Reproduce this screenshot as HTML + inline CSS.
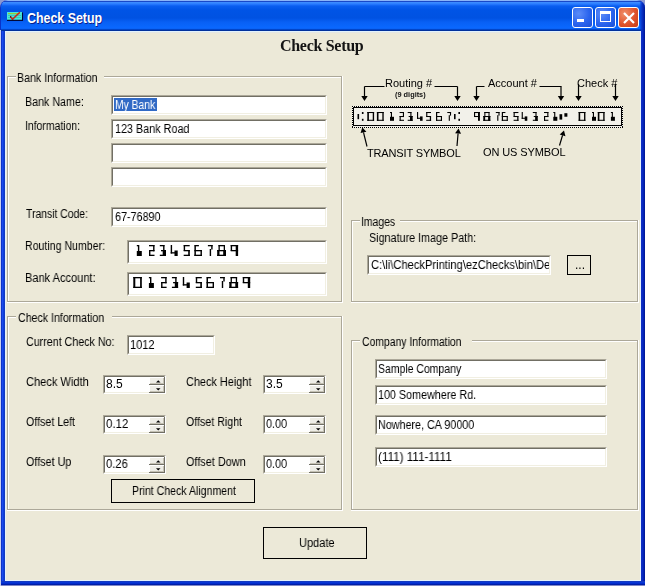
<!DOCTYPE html><html><head><meta charset="utf-8"><style>
*{margin:0;padding:0;box-sizing:border-box}
html,body{width:645px;height:586px;overflow:hidden;background:#8c98d0}
body{position:relative;font-family:"Liberation Sans",sans-serif;font-size:11px;color:#000}
.a{position:absolute}
.t{position:absolute;white-space:pre;line-height:13px;letter-spacing:-0.28px;will-change:transform}
.gl{position:absolute;background:#aca899}
.gw{position:absolute;background:#fff}
.tb{position:absolute;background:#fff}
.tb .o{position:absolute;left:0;top:0;right:0;bottom:0;border-top:1px solid #aca899;border-left:1px solid #aca899;border-right:1px solid #fff;border-bottom:1px solid #fff}
.tb .i{position:absolute;left:1px;top:1px;right:1px;bottom:1px;border-top:1px solid #716f64;border-left:1px solid #716f64;border-right:1px solid #f1efe2;border-bottom:1px solid #f1efe2}
.btn{position:absolute;border:1px solid #000;background:#ece9d8}
svg{position:absolute;left:0;top:0}
</style></head><body>
<div class="a" style="left:0;top:0;width:645px;height:586px;background:#0a32c8;border-radius:8px 8px 0 0"></div>
<div class="a" style="left:1px;top:1px;width:643px;height:584px;background:#1848e8;border-radius:7px 7px 0 0"></div>
<div class="a" style="left:1px;top:0px;width:643px;height:31px;border-radius:7px 7px 0 0;background:linear-gradient(180deg,#8ab4f8 0px,#8ab4f8 1px,#1848c8 1px,#1848c8 2px,#4090ff 2px,#2a7cff 4px,#0a5ef0 6px,#0054e6 10px,#0052e2 18px,#0860f4 22px,#0a68ff 28px,#0a60f0 29px,#0040c0 29.6px,#00309c 30.5px,#00309c 31px)"></div>
<div class="a" style="left:1px;top:31px;width:4px;height:554px;background:linear-gradient(90deg,#0020b0,#2050f0 30%,#0a3ada 70%,#1a3ab0)"></div>
<div class="a" style="left:641px;top:31px;width:4px;height:554px;background:linear-gradient(90deg,#1030c0,#0a2cc8 30%,#0020b0 70%,#001490)"></div>
<div class="a" style="left:638px;top:1px;width:7px;height:30px;border-radius:0 7px 0 0;background:linear-gradient(90deg,rgba(16,64,216,0) 20%,#0a34c8 55%,#0020a8 85%,#001890)"></div>
<div class="a" style="left:1px;top:581px;width:644px;height:4px;background:linear-gradient(180deg,#1a3ab0,#0a3ada 30%,#0028c8 70%,#001890)"></div>
<div class="a" style="left:0;top:585px;width:645px;height:1px;background:#8088c8"></div>
<div class="a" style="left:0;top:30px;width:1px;height:556px;background:#c8d0f0"></div>
<div class="a" style="left:5px;top:31px;width:636px;height:550px;background:#ece9d8;border:1px solid #e4f2fc;border-right-color:#e4f2fc"></div>
<div class="a" style="left:6px;top:31px;width:634px;height:1px;background:#e2f2fc"></div><div class="a" style="left:6px;top:32px;width:634px;height:1px;background:#e4e6e2"></div>
<svg class="a" style="left:6px;top:11px" width="18" height="11"><rect x="1" y="1" width="15" height="8" fill="#48e8d8"/><rect x="2" y="2" width="12" height="1.2" fill="#98c838"/><rect x="2" y="4" width="13" height="0.8" fill="#38b8c0"/><rect x="2" y="6" width="13" height="0.8" fill="#38c8b0"/><rect x="4" y="5" width="1.2" height="2" fill="#203040"/><path d="M4.8 6 L6.5 8.3 L13.8 1.3" stroke="#c82818" stroke-width="1.5" fill="none"/><path d="M1 9.4 H16.5 V1.5" stroke="#000838" stroke-width="1.1" fill="none"/></svg>
<div class="a" style="left:27px;top:11px;color:#fff;font-weight:bold;font-size:14px;line-height:15px;white-space:pre;transform:scaleX(0.885);transform-origin:0 0;text-shadow:1px 1px 0 #0a1e8a">Check Setup</div>
<div class="a" style="left:572px;top:7px;width:21px;height:21px;border:1px solid #fff;border-radius:3px;background:radial-gradient(circle at 30% 30%,#5c8cf8,#2a64ee 55%,#1a50d8)"></div>
<div class="a" style="left:595px;top:7px;width:21px;height:21px;border:1px solid #fff;border-radius:3px;background:radial-gradient(circle at 30% 30%,#5c8cf8,#2a64ee 55%,#1a50d8)"></div>
<div class="a" style="left:618px;top:7px;width:21px;height:21px;border:1px solid #fff;border-radius:3px;background:radial-gradient(circle at 30% 30%,#f0906c,#e0542c 55%,#c83c14)"></div>
<div class="a" style="left:577px;top:19px;width:7px;height:3px;background:#fff"></div>
<div class="a" style="left:600px;top:11px;width:11px;height:11px;border:1px solid #fff;border-top-width:3px"></div>
<svg class="a" style="left:618px;top:6px" width="22" height="22"><path d="M6 7 L16 17 M16 7 L6 17" stroke="#fff" stroke-width="2.2"/></svg>
<div class="a" style="left:280px;top:37px;font-family:'Liberation Serif',serif;font-weight:bold;font-size:16px;line-height:17px;letter-spacing:-0.3px;white-space:pre;color:#141414;will-change:transform">Check Setup</div>
<div class="gl" style="left:7px;top:76px;width:9px;height:1px"></div>
<div class="gl" style="left:104px;top:76px;width:238px;height:1px"></div>
<div class="gl" style="left:7px;top:76px;width:1px;height:226px"></div>
<div class="gl" style="left:341px;top:76px;width:1px;height:226px"></div>
<div class="gl" style="left:7px;top:301px;width:335px;height:1px"></div>
<div class="gw" style="left:8px;top:77px;width:8px;height:1px"></div>
<div class="gw" style="left:104px;top:77px;width:237px;height:1px"></div>
<div class="gw" style="left:8px;top:77px;width:1px;height:224px"></div>
<div class="gw" style="left:342px;top:76px;width:1px;height:227px"></div>
<div class="gw" style="left:7px;top:302px;width:336px;height:1px"></div>
<div class="t" style="left:17px;top:72px;font-size:12px;letter-spacing:0;transform:scaleX(0.888);transform-origin:0 0;">Bank Information</div>
<div class="t" style="left:25px;top:96px;font-size:12px;letter-spacing:0;transform:scaleX(0.891);transform-origin:0 0;">Bank Name:</div>
<div class="t" style="left:25px;top:120px;font-size:12px;letter-spacing:0;transform:scaleX(0.869);transform-origin:0 0;">Information:</div>
<div class="t" style="left:26px;top:208px;font-size:12px;letter-spacing:0;transform:scaleX(0.865);transform-origin:0 0;">Transit Code:</div>
<div class="t" style="left:25px;top:240px;font-size:12px;letter-spacing:0;transform:scaleX(0.882);transform-origin:0 0;">Routing Number:</div>
<div class="t" style="left:25px;top:272px;font-size:12px;letter-spacing:0;transform:scaleX(0.92);transform-origin:0 0;">Bank Account:</div>
<div class="tb" style="left:111px;top:95px;width:216px;height:20px"><div class="o"></div><div class="i"></div></div>
<div class="a" style="left:114px;top:98px;width:43px;height:13px;background:#316ac5"></div>
<div class="t" style="left:114.5px;top:99px;font-size:12px;letter-spacing:0;transform:scaleX(0.86);transform-origin:0 0;color:#fff">My Bank</div>
<div class="tb" style="left:111px;top:119px;width:216px;height:20px"><div class="o"></div><div class="i"></div></div>
<div class="t" style="left:114.5px;top:123px;font-size:12px;letter-spacing:0;transform:scaleX(0.9);transform-origin:0 0;">123 Bank Road</div>
<div class="tb" style="left:111px;top:143px;width:216px;height:20px"><div class="o"></div><div class="i"></div></div>
<div class="tb" style="left:111px;top:167px;width:216px;height:20px"><div class="o"></div><div class="i"></div></div>
<div class="tb" style="left:111px;top:207px;width:216px;height:20px"><div class="o"></div><div class="i"></div></div>
<div class="t" style="left:114.5px;top:211px;font-size:12px;letter-spacing:0;transform:scaleX(0.898);transform-origin:0 0;">67-76890</div>
<div class="tb" style="left:127px;top:240px;width:200px;height:24px"><div class="o"></div><div class="i"></div></div>
<div class="tb" style="left:127px;top:272px;width:200px;height:24px"><div class="o"></div><div class="i"></div></div>
<div class="gl" style="left:7px;top:316px;width:9px;height:1px"></div>
<div class="gl" style="left:112px;top:316px;width:230px;height:1px"></div>
<div class="gl" style="left:7px;top:316px;width:1px;height:194px"></div>
<div class="gl" style="left:341px;top:316px;width:1px;height:194px"></div>
<div class="gl" style="left:7px;top:509px;width:335px;height:1px"></div>
<div class="gw" style="left:8px;top:317px;width:8px;height:1px"></div>
<div class="gw" style="left:112px;top:317px;width:229px;height:1px"></div>
<div class="gw" style="left:8px;top:317px;width:1px;height:192px"></div>
<div class="gw" style="left:342px;top:316px;width:1px;height:195px"></div>
<div class="gw" style="left:7px;top:510px;width:336px;height:1px"></div>
<div class="t" style="left:18px;top:312px;font-size:12px;letter-spacing:0;transform:scaleX(0.885);transform-origin:0 0;">Check Information</div>
<div class="t" style="left:26px;top:336px;font-size:12px;letter-spacing:0;transform:scaleX(0.891);transform-origin:0 0;">Current Check No:</div>
<div class="tb" style="left:127px;top:335px;width:88px;height:20px"><div class="o"></div><div class="i"></div></div>
<div class="t" style="left:130px;top:339px;font-size:12px;letter-spacing:0;transform:scaleX(0.92);transform-origin:0 0;">1012</div>
<div class="t" style="left:26px;top:376px;font-size:12px;letter-spacing:0;transform:scaleX(0.924);transform-origin:0 0;">Check Width</div>
<div class="t" style="left:186px;top:376px;font-size:12px;letter-spacing:0;transform:scaleX(0.908);transform-origin:0 0;">Check Height</div>
<div class="t" style="left:26px;top:416px;font-size:12px;letter-spacing:0;transform:scaleX(0.889);transform-origin:0 0;">Offset Left</div>
<div class="t" style="left:186px;top:416px;font-size:12px;letter-spacing:0;transform:scaleX(0.887);transform-origin:0 0;">Offset Right</div>
<div class="t" style="left:26px;top:456px;font-size:12px;letter-spacing:0;transform:scaleX(0.898);transform-origin:0 0;">Offset Up</div>
<div class="t" style="left:186px;top:456px;font-size:12px;letter-spacing:0;transform:scaleX(0.906);transform-origin:0 0;">Offset Down</div>
<div class="tb" style="left:103px;top:375px;width:63px;height:19px"><div class="o"></div><div class="i"></div></div>
<div class="t" style="left:106px;top:378px;font-size:12px;letter-spacing:0;transform:scaleX(1.0);transform-origin:0 0;">8.5</div>
<div class="a" style="left:149px;top:377px;width:16px;height:8px;background:#eeede6;border-right:1px solid #716f64;border-bottom:1px solid #716f64;box-shadow:inset 1px 1px 0 #fff,inset -1px -1px 0 #c4c1b4"></div>
<svg class="a" style="left:156px;top:380px" width="5" height="3"><path d="M0 2.5 L2.25 0.2 L4.5 2.5Z" fill="#000"/></svg>
<div class="a" style="left:149px;top:385px;width:16px;height:8px;background:#eeede6;border-right:1px solid #716f64;border-bottom:1px solid #716f64;box-shadow:inset 1px 1px 0 #fff,inset -1px -1px 0 #c4c1b4"></div>
<svg class="a" style="left:156px;top:388px" width="5" height="3"><path d="M0 0.3 L2.25 2.6 L4.5 0.3Z" fill="#000"/></svg>
<div class="tb" style="left:263px;top:375px;width:63px;height:19px"><div class="o"></div><div class="i"></div></div>
<div class="t" style="left:266px;top:378px;font-size:12px;letter-spacing:0;transform:scaleX(1.0);transform-origin:0 0;">3.5</div>
<div class="a" style="left:309px;top:377px;width:16px;height:8px;background:#eeede6;border-right:1px solid #716f64;border-bottom:1px solid #716f64;box-shadow:inset 1px 1px 0 #fff,inset -1px -1px 0 #c4c1b4"></div>
<svg class="a" style="left:316px;top:380px" width="5" height="3"><path d="M0 2.5 L2.25 0.2 L4.5 2.5Z" fill="#000"/></svg>
<div class="a" style="left:309px;top:385px;width:16px;height:8px;background:#eeede6;border-right:1px solid #716f64;border-bottom:1px solid #716f64;box-shadow:inset 1px 1px 0 #fff,inset -1px -1px 0 #c4c1b4"></div>
<svg class="a" style="left:316px;top:388px" width="5" height="3"><path d="M0 0.3 L2.25 2.6 L4.5 0.3Z" fill="#000"/></svg>
<div class="tb" style="left:103px;top:415px;width:63px;height:19px"><div class="o"></div><div class="i"></div></div>
<div class="t" style="left:106px;top:418px;font-size:12px;letter-spacing:0;transform:scaleX(0.955);transform-origin:0 0;">0.12</div>
<div class="a" style="left:149px;top:417px;width:16px;height:8px;background:#eeede6;border-right:1px solid #716f64;border-bottom:1px solid #716f64;box-shadow:inset 1px 1px 0 #fff,inset -1px -1px 0 #c4c1b4"></div>
<svg class="a" style="left:156px;top:420px" width="5" height="3"><path d="M0 2.5 L2.25 0.2 L4.5 2.5Z" fill="#000"/></svg>
<div class="a" style="left:149px;top:425px;width:16px;height:8px;background:#eeede6;border-right:1px solid #716f64;border-bottom:1px solid #716f64;box-shadow:inset 1px 1px 0 #fff,inset -1px -1px 0 #c4c1b4"></div>
<svg class="a" style="left:156px;top:428px" width="5" height="3"><path d="M0 0.3 L2.25 2.6 L4.5 0.3Z" fill="#000"/></svg>
<div class="tb" style="left:263px;top:415px;width:63px;height:19px"><div class="o"></div><div class="i"></div></div>
<div class="t" style="left:266px;top:418px;font-size:12px;letter-spacing:0;transform:scaleX(0.9);transform-origin:0 0;">0.00</div>
<div class="a" style="left:309px;top:417px;width:16px;height:8px;background:#eeede6;border-right:1px solid #716f64;border-bottom:1px solid #716f64;box-shadow:inset 1px 1px 0 #fff,inset -1px -1px 0 #c4c1b4"></div>
<svg class="a" style="left:316px;top:420px" width="5" height="3"><path d="M0 2.5 L2.25 0.2 L4.5 2.5Z" fill="#000"/></svg>
<div class="a" style="left:309px;top:425px;width:16px;height:8px;background:#eeede6;border-right:1px solid #716f64;border-bottom:1px solid #716f64;box-shadow:inset 1px 1px 0 #fff,inset -1px -1px 0 #c4c1b4"></div>
<svg class="a" style="left:316px;top:428px" width="5" height="3"><path d="M0 0.3 L2.25 2.6 L4.5 0.3Z" fill="#000"/></svg>
<div class="tb" style="left:103px;top:455px;width:63px;height:19px"><div class="o"></div><div class="i"></div></div>
<div class="t" style="left:106px;top:458px;font-size:12px;letter-spacing:0;transform:scaleX(0.93);transform-origin:0 0;">0.26</div>
<div class="a" style="left:149px;top:457px;width:16px;height:8px;background:#eeede6;border-right:1px solid #716f64;border-bottom:1px solid #716f64;box-shadow:inset 1px 1px 0 #fff,inset -1px -1px 0 #c4c1b4"></div>
<svg class="a" style="left:156px;top:460px" width="5" height="3"><path d="M0 2.5 L2.25 0.2 L4.5 2.5Z" fill="#000"/></svg>
<div class="a" style="left:149px;top:465px;width:16px;height:8px;background:#eeede6;border-right:1px solid #716f64;border-bottom:1px solid #716f64;box-shadow:inset 1px 1px 0 #fff,inset -1px -1px 0 #c4c1b4"></div>
<svg class="a" style="left:156px;top:468px" width="5" height="3"><path d="M0 0.3 L2.25 2.6 L4.5 0.3Z" fill="#000"/></svg>
<div class="tb" style="left:263px;top:455px;width:63px;height:19px"><div class="o"></div><div class="i"></div></div>
<div class="t" style="left:266px;top:458px;font-size:12px;letter-spacing:0;transform:scaleX(0.9);transform-origin:0 0;">0.00</div>
<div class="a" style="left:309px;top:457px;width:16px;height:8px;background:#eeede6;border-right:1px solid #716f64;border-bottom:1px solid #716f64;box-shadow:inset 1px 1px 0 #fff,inset -1px -1px 0 #c4c1b4"></div>
<svg class="a" style="left:316px;top:460px" width="5" height="3"><path d="M0 2.5 L2.25 0.2 L4.5 2.5Z" fill="#000"/></svg>
<div class="a" style="left:309px;top:465px;width:16px;height:8px;background:#eeede6;border-right:1px solid #716f64;border-bottom:1px solid #716f64;box-shadow:inset 1px 1px 0 #fff,inset -1px -1px 0 #c4c1b4"></div>
<svg class="a" style="left:316px;top:468px" width="5" height="3"><path d="M0 0.3 L2.25 2.6 L4.5 0.3Z" fill="#000"/></svg>
<div class="btn" style="left:111px;top:479px;width:144px;height:24px"></div>
<div class="t" style="left:132px;top:485px;font-size:12px;letter-spacing:0;transform:scaleX(0.88);transform-origin:0 0;">Print Check Alignment</div>
<div class="gl" style="left:351px;top:220px;width:9px;height:1px"></div>
<div class="gl" style="left:400px;top:220px;width:238px;height:1px"></div>
<div class="gl" style="left:351px;top:220px;width:1px;height:82px"></div>
<div class="gl" style="left:637px;top:220px;width:1px;height:82px"></div>
<div class="gl" style="left:351px;top:301px;width:287px;height:1px"></div>
<div class="gw" style="left:352px;top:221px;width:8px;height:1px"></div>
<div class="gw" style="left:400px;top:221px;width:237px;height:1px"></div>
<div class="gw" style="left:352px;top:221px;width:1px;height:80px"></div>
<div class="gw" style="left:638px;top:220px;width:1px;height:83px"></div>
<div class="gw" style="left:351px;top:302px;width:288px;height:1px"></div>
<div class="t" style="left:361px;top:216px;font-size:12px;letter-spacing:0;transform:scaleX(0.868);transform-origin:0 0;">Images</div>
<div class="t" style="left:369px;top:232px;font-size:12px;letter-spacing:0;transform:scaleX(0.897);transform-origin:0 0;">Signature Image Path:</div>
<div class="tb" style="left:367px;top:255px;width:184px;height:20px"><div class="o"></div><div class="i"></div></div>
<div style="position:absolute;left:370px;top:258px;width:179px;height:15px;overflow:hidden">
<div class="t" style="left:1px;top:1px;font-size:12px;letter-spacing:0;transform:scaleX(0.93);transform-origin:0 0">C:\li\CheckPrinting\ezChecks\bin\Debug</div>
</div>
<div class="btn" style="left:567px;top:255px;width:24px;height:20px"></div>
<div class="t" style="left:575px;top:259px;font-size:12px;letter-spacing:0;transform:scaleX(1.0);transform-origin:0 0;">...</div>
<div class="gl" style="left:351px;top:340px;width:9px;height:1px"></div>
<div class="gl" style="left:472px;top:340px;width:166px;height:1px"></div>
<div class="gl" style="left:351px;top:340px;width:1px;height:170px"></div>
<div class="gl" style="left:637px;top:340px;width:1px;height:170px"></div>
<div class="gl" style="left:351px;top:509px;width:287px;height:1px"></div>
<div class="gw" style="left:352px;top:341px;width:8px;height:1px"></div>
<div class="gw" style="left:472px;top:341px;width:165px;height:1px"></div>
<div class="gw" style="left:352px;top:341px;width:1px;height:168px"></div>
<div class="gw" style="left:638px;top:340px;width:1px;height:171px"></div>
<div class="gw" style="left:351px;top:510px;width:288px;height:1px"></div>
<div class="t" style="left:362px;top:336px;font-size:12px;letter-spacing:0;transform:scaleX(0.867);transform-origin:0 0;">Company Information</div>
<div class="tb" style="left:375px;top:359px;width:232px;height:20px"><div class="o"></div><div class="i"></div></div>
<div class="t" style="left:378px;top:363px;font-size:12px;letter-spacing:0;transform:scaleX(0.872);transform-origin:0 0;">Sample Company</div>
<div class="tb" style="left:375px;top:385px;width:232px;height:20px"><div class="o"></div><div class="i"></div></div>
<div class="t" style="left:378px;top:389px;font-size:12px;letter-spacing:0;transform:scaleX(0.897);transform-origin:0 0;">100 Somewhere Rd.</div>
<style>.ls16{letter-spacing:-0.16px}</style>
<div class="tb" style="left:375px;top:415px;width:232px;height:20px"><div class="o"></div><div class="i"></div></div>
<div class="t" style="left:378px;top:419px;font-size:12px;letter-spacing:0;transform:scaleX(0.896);transform-origin:0 0;">Nowhere, CA 90000</div>
<div class="tb" style="left:375px;top:447px;width:232px;height:20px"><div class="o"></div><div class="i"></div></div>
<div class="t" style="left:378px;top:451px;font-size:12px;letter-spacing:0;transform:scaleX(0.973);transform-origin:0 0;">(111) 111-1111</div>
<div class="btn" style="left:263px;top:527px;width:104px;height:32px"></div>
<div class="t" style="left:299px;top:537px;font-size:12px;letter-spacing:0;transform:scaleX(0.919);transform-origin:0 0;">Update</div>
<svg width="645" height="586" style="position:absolute;left:0;top:0" fill="#000"><rect x="136.80" y="245.00" width="2.00" height="1.30"/><rect x="137.90" y="245.00" width="1.40" height="6.50"/><rect x="136.80" y="251.00" width="5.00" height="5.00"/><rect x="149.00" y="245.00" width="5.50" height="1.30"/><rect x="153.10" y="245.00" width="1.40" height="6.30"/><rect x="149.00" y="250.00" width="5.50" height="1.30"/><rect x="149.00" y="250.00" width="1.40" height="6.00"/><rect x="149.00" y="254.70" width="5.50" height="1.30"/><rect x="159.80" y="245.00" width="4.70" height="1.30"/><rect x="163.10" y="245.00" width="1.40" height="6.00"/><rect x="161.00" y="250.00" width="5.00" height="1.30"/><rect x="162.70" y="250.00" width="3.30" height="6.00"/><rect x="159.80" y="254.70" width="6.20" height="1.30"/><rect x="170.70" y="245.00" width="1.40" height="8.50"/><rect x="170.70" y="252.20" width="6.00" height="1.30"/><rect x="174.50" y="250.50" width="3.20" height="5.50"/><rect x="183.70" y="245.00" width="6.00" height="1.30"/><rect x="183.70" y="245.00" width="1.40" height="6.00"/><rect x="183.70" y="250.00" width="6.00" height="1.30"/><rect x="188.20" y="250.00" width="1.60" height="6.00"/><rect x="183.70" y="254.70" width="6.10" height="1.30"/><rect x="194.70" y="245.00" width="4.20" height="1.30"/><rect x="194.40" y="245.00" width="1.50" height="11.00"/><rect x="194.40" y="250.00" width="7.50" height="1.30"/><rect x="200.50" y="250.00" width="1.40" height="6.00"/><rect x="194.40" y="254.70" width="7.50" height="1.30"/><rect x="207.90" y="245.00" width="4.70" height="1.30"/><rect x="211.20" y="245.00" width="1.40" height="4.50"/><rect x="209.70" y="249.00" width="1.40" height="7.00"/><rect x="218.50" y="245.00" width="6.50" height="1.30"/><rect x="218.50" y="245.00" width="1.30" height="5.50"/><rect x="223.70" y="245.00" width="1.30" height="5.50"/><rect x="217.20" y="250.00" width="8.80" height="1.30"/><rect x="217.20" y="250.00" width="2.30" height="6.00"/><rect x="223.20" y="250.00" width="2.80" height="6.00"/><rect x="217.20" y="254.70" width="8.80" height="1.30"/><rect x="230.70" y="245.00" width="7.40" height="1.30"/><rect x="230.70" y="245.00" width="1.40" height="6.00"/><rect x="230.70" y="250.00" width="7.40" height="1.30"/><rect x="235.70" y="245.00" width="2.40" height="11.00"/><rect x="133.30" y="277.00" width="8.50" height="1.30"/><rect x="133.30" y="286.70" width="8.50" height="1.30"/><rect x="133.30" y="277.00" width="2.00" height="11.00"/><rect x="140.10" y="277.00" width="1.70" height="11.00"/><rect x="148.90" y="277.00" width="2.00" height="1.30"/><rect x="150.00" y="277.00" width="1.40" height="6.50"/><rect x="148.90" y="283.00" width="5.00" height="5.00"/><rect x="161.10" y="277.00" width="5.50" height="1.30"/><rect x="165.20" y="277.00" width="1.40" height="6.30"/><rect x="161.10" y="282.00" width="5.50" height="1.30"/><rect x="161.10" y="282.00" width="1.40" height="6.00"/><rect x="161.10" y="286.70" width="5.50" height="1.30"/><rect x="171.90" y="277.00" width="4.70" height="1.30"/><rect x="175.20" y="277.00" width="1.40" height="6.00"/><rect x="173.10" y="282.00" width="5.00" height="1.30"/><rect x="174.80" y="282.00" width="3.30" height="6.00"/><rect x="171.90" y="286.70" width="6.20" height="1.30"/><rect x="182.80" y="277.00" width="1.40" height="8.50"/><rect x="182.80" y="284.20" width="6.00" height="1.30"/><rect x="186.60" y="282.50" width="3.20" height="5.50"/><rect x="195.80" y="277.00" width="6.00" height="1.30"/><rect x="195.80" y="277.00" width="1.40" height="6.00"/><rect x="195.80" y="282.00" width="6.00" height="1.30"/><rect x="200.30" y="282.00" width="1.60" height="6.00"/><rect x="195.80" y="286.70" width="6.10" height="1.30"/><rect x="206.80" y="277.00" width="4.20" height="1.30"/><rect x="206.50" y="277.00" width="1.50" height="11.00"/><rect x="206.50" y="282.00" width="7.50" height="1.30"/><rect x="212.60" y="282.00" width="1.40" height="6.00"/><rect x="206.50" y="286.70" width="7.50" height="1.30"/><rect x="220.00" y="277.00" width="4.70" height="1.30"/><rect x="223.30" y="277.00" width="1.40" height="4.50"/><rect x="221.80" y="281.00" width="1.40" height="7.00"/><rect x="230.60" y="277.00" width="6.50" height="1.30"/><rect x="230.60" y="277.00" width="1.30" height="5.50"/><rect x="235.80" y="277.00" width="1.30" height="5.50"/><rect x="229.30" y="282.00" width="8.80" height="1.30"/><rect x="229.30" y="282.00" width="2.30" height="6.00"/><rect x="235.30" y="282.00" width="2.80" height="6.00"/><rect x="229.30" y="286.70" width="8.80" height="1.30"/><rect x="242.80" y="277.00" width="7.40" height="1.30"/><rect x="242.80" y="277.00" width="1.40" height="6.00"/><rect x="242.80" y="282.00" width="7.40" height="1.30"/><rect x="247.80" y="277.00" width="2.40" height="11.00"/><rect x="352" y="106" width="271" height="22" fill="#f2f1ea"/><rect x="353.5" y="107.5" width="268" height="18" fill="none" stroke="#000" stroke-width="1"/><path d="M352 106.5 H623 M352 127.5 H623 M352.5 106 V128 M622.5 106 V128" stroke="#000" stroke-width="1" stroke-dasharray="1 1" fill="none"/><rect x="357.50" y="114.00" width="1.60" height="5.20"/><rect x="361.90" y="112.00" width="1.60" height="2.00"/><rect x="361.90" y="118.80" width="1.60" height="2.00"/><rect x="367.30" y="112.00" width="6.80" height="1.04"/><rect x="367.30" y="119.76" width="6.80" height="1.04"/><rect x="367.30" y="112.00" width="1.60" height="8.80"/><rect x="372.74" y="112.00" width="1.36" height="8.80"/><rect x="376.90" y="112.00" width="6.80" height="1.04"/><rect x="376.90" y="119.76" width="6.80" height="1.04"/><rect x="376.90" y="112.00" width="1.60" height="8.80"/><rect x="382.34" y="112.00" width="1.36" height="8.80"/><rect x="390.00" y="112.00" width="1.60" height="1.04"/><rect x="390.88" y="112.00" width="1.12" height="5.20"/><rect x="390.00" y="116.80" width="4.00" height="4.00"/><rect x="399.60" y="112.00" width="4.40" height="1.04"/><rect x="402.88" y="112.00" width="1.12" height="5.04"/><rect x="399.60" y="116.00" width="4.40" height="1.04"/><rect x="399.60" y="116.00" width="1.12" height="4.80"/><rect x="399.60" y="119.76" width="4.40" height="1.04"/><rect x="407.70" y="112.00" width="3.76" height="1.04"/><rect x="410.34" y="112.00" width="1.12" height="4.80"/><rect x="408.66" y="116.00" width="4.00" height="1.04"/><rect x="410.02" y="116.00" width="2.64" height="4.80"/><rect x="407.70" y="119.76" width="4.96" height="1.04"/><rect x="417.00" y="112.00" width="1.12" height="6.80"/><rect x="417.00" y="117.76" width="4.80" height="1.04"/><rect x="420.04" y="116.40" width="2.56" height="4.40"/><rect x="426.20" y="112.00" width="4.80" height="1.04"/><rect x="426.20" y="112.00" width="1.12" height="4.80"/><rect x="426.20" y="116.00" width="4.80" height="1.04"/><rect x="429.80" y="116.00" width="1.28" height="4.80"/><rect x="426.20" y="119.76" width="4.88" height="1.04"/><rect x="436.24" y="112.00" width="3.36" height="1.04"/><rect x="436.00" y="112.00" width="1.20" height="8.80"/><rect x="436.00" y="116.00" width="6.00" height="1.04"/><rect x="440.88" y="116.00" width="1.12" height="4.80"/><rect x="436.00" y="119.76" width="6.00" height="1.04"/><rect x="447.30" y="112.00" width="3.76" height="1.04"/><rect x="449.94" y="112.00" width="1.12" height="3.60"/><rect x="448.74" y="115.20" width="1.12" height="5.60"/><rect x="454.00" y="114.00" width="1.60" height="5.20"/><rect x="458.40" y="112.00" width="1.60" height="2.00"/><rect x="458.40" y="118.80" width="1.60" height="2.00"/><rect x="474.00" y="112.00" width="5.92" height="1.04"/><rect x="474.00" y="112.00" width="1.12" height="4.80"/><rect x="474.00" y="116.00" width="5.92" height="1.04"/><rect x="478.00" y="112.00" width="1.92" height="8.80"/><rect x="484.34" y="112.00" width="5.20" height="1.04"/><rect x="484.34" y="112.00" width="1.04" height="4.40"/><rect x="488.50" y="112.00" width="1.04" height="4.40"/><rect x="483.30" y="116.00" width="7.04" height="1.04"/><rect x="483.30" y="116.00" width="1.84" height="4.80"/><rect x="488.10" y="116.00" width="2.24" height="4.80"/><rect x="483.30" y="119.76" width="7.04" height="1.04"/><rect x="495.80" y="112.00" width="3.76" height="1.04"/><rect x="498.44" y="112.00" width="1.12" height="3.60"/><rect x="497.24" y="115.20" width="1.12" height="5.60"/><rect x="502.04" y="112.00" width="3.36" height="1.04"/><rect x="501.80" y="112.00" width="1.20" height="8.80"/><rect x="501.80" y="116.00" width="6.00" height="1.04"/><rect x="506.68" y="116.00" width="1.12" height="4.80"/><rect x="501.80" y="119.76" width="6.00" height="1.04"/><rect x="513.60" y="112.00" width="4.80" height="1.04"/><rect x="513.60" y="112.00" width="1.12" height="4.80"/><rect x="513.60" y="116.00" width="4.80" height="1.04"/><rect x="517.20" y="116.00" width="1.28" height="4.80"/><rect x="513.60" y="119.76" width="4.88" height="1.04"/><rect x="521.70" y="112.00" width="1.12" height="6.80"/><rect x="521.70" y="117.76" width="4.80" height="1.04"/><rect x="524.74" y="116.40" width="2.56" height="4.40"/><rect x="532.80" y="112.00" width="3.76" height="1.04"/><rect x="535.44" y="112.00" width="1.12" height="4.80"/><rect x="533.76" y="116.00" width="4.00" height="1.04"/><rect x="535.12" y="116.00" width="2.64" height="4.80"/><rect x="532.80" y="119.76" width="4.96" height="1.04"/><rect x="544.00" y="112.00" width="4.40" height="1.04"/><rect x="547.28" y="112.00" width="1.12" height="5.04"/><rect x="544.00" y="116.00" width="4.40" height="1.04"/><rect x="544.00" y="116.00" width="1.12" height="4.80"/><rect x="544.00" y="119.76" width="4.40" height="1.04"/><rect x="553.30" y="112.00" width="1.60" height="1.04"/><rect x="554.18" y="112.00" width="1.12" height="5.20"/><rect x="553.30" y="116.80" width="4.00" height="4.00"/><rect x="559.50" y="114.20" width="2.72" height="5.40"/><rect x="564.38" y="113.20" width="3.00" height="3.52"/><rect x="578.60" y="112.00" width="6.80" height="1.04"/><rect x="578.60" y="119.76" width="6.80" height="1.04"/><rect x="578.60" y="112.00" width="1.60" height="8.80"/><rect x="584.04" y="112.00" width="1.36" height="8.80"/><rect x="592.00" y="112.00" width="1.60" height="1.04"/><rect x="592.88" y="112.00" width="1.12" height="5.20"/><rect x="592.00" y="116.80" width="4.00" height="4.00"/><rect x="597.80" y="112.00" width="6.80" height="1.04"/><rect x="597.80" y="119.76" width="6.80" height="1.04"/><rect x="597.80" y="112.00" width="1.60" height="8.80"/><rect x="603.24" y="112.00" width="1.36" height="8.80"/><rect x="610.90" y="112.00" width="1.60" height="1.04"/><rect x="611.78" y="112.00" width="1.12" height="5.20"/><rect x="610.90" y="116.80" width="4.00" height="4.00"/><path d="M364.5 86.5 H384.5 M434.5 86.5 H457.5 M476.5 86.5 H484.5 M539.5 86.5 H561.5" stroke="#000" stroke-width="1.2" fill="none"/><path d="M364.5 86.5 V97" stroke="#000" stroke-width="1.2" fill="none"/><path d="M361.3 96 L367.7 96 L364.5 101Z"/><path d="M457.5 86.5 V97" stroke="#000" stroke-width="1.2" fill="none"/><path d="M454.3 96 L460.7 96 L457.5 101Z"/><path d="M476.5 86.5 V97" stroke="#000" stroke-width="1.2" fill="none"/><path d="M473.3 96 L479.7 96 L476.5 101Z"/><path d="M561 86.5 V97" stroke="#000" stroke-width="1.2" fill="none"/><path d="M557.8 96 L564.2 96 L561 101Z"/><path d="M578.5 84 V97" stroke="#000" stroke-width="1.2" fill="none"/><path d="M575.3 96 L581.7 96 L578.5 101Z"/><path d="M615.5 84 V97" stroke="#000" stroke-width="1.2" fill="none"/><path d="M612.3 96 L618.7 96 L615.5 101Z"/><path d="M367 146.5 L363.50 132.35" stroke="#000" stroke-width="1.2" fill="none"/><path d="M362.3 127.5 L366.41 131.63 L360.59 133.07Z"/><path d="M457 146 L458.07 133.48" stroke="#000" stroke-width="1.2" fill="none"/><path d="M458.5 128.5 L461.06 133.74 L455.08 133.23Z"/><path d="M559.5 145.5 L562.56 135.29" stroke="#000" stroke-width="1.2" fill="none"/><path d="M564 130.5 L565.44 136.15 L559.69 134.43Z"/></svg>
<div class="t" style="left:385px;top:77px;letter-spacing:0">Routing #</div>
<div class="a" style="left:395px;top:90px;font-size:8px;font-weight:bold;line-height:9px;white-space:pre;transform:scaleX(0.92);transform-origin:0 0;color:#111">(9 digits)</div>
<div class="t" style="left:488px;top:77px;letter-spacing:0">Account #</div>
<div class="t" style="left:577px;top:77px;letter-spacing:0">Check #</div>
<div class="t" style="left:367px;top:147px;letter-spacing:-0.15px">TRANSIT SYMBOL</div>
<div class="t" style="left:483px;top:146px;letter-spacing:-0.1px">ON US SYMBOL</div>
</body></html>
